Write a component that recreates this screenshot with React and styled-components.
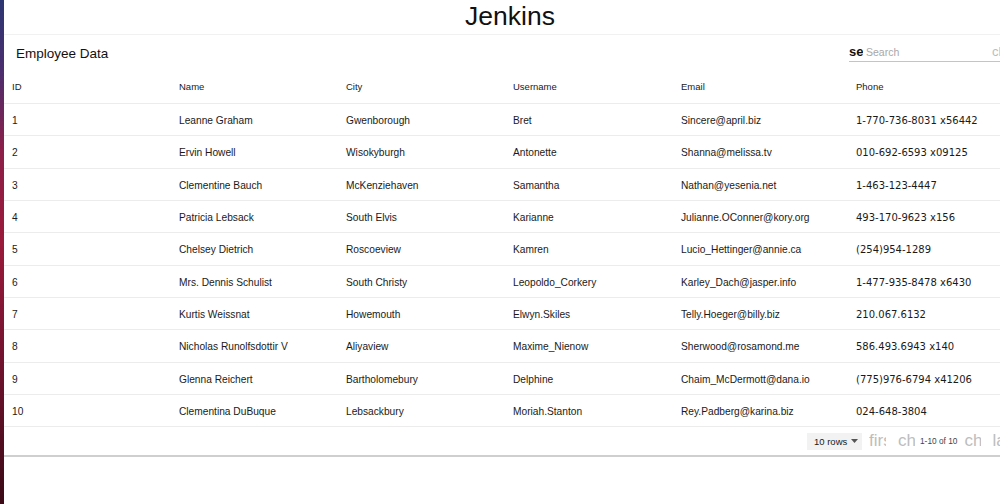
import React from 'react';
import styled, { createGlobalStyle } from 'styled-components';

const GlobalStyle = createGlobalStyle`
  html, body {
    margin: 0;
    padding: 0;
    background: #ffffff;
    overflow: hidden;
  }
  body {
    font-family: "Liberation Sans", Arial, sans-serif;
    color: rgba(0, 0, 0, 0.87);
  }
`;

const COLUMNS = [
  { key: 'id', title: 'ID', width: '167px' },
  { key: 'name', title: 'Name', width: '167px' },
  { key: 'city', title: 'City', width: '167px' },
  { key: 'username', title: 'Username', width: '168px' },
  { key: 'email', title: 'Email', width: '175px' },
  { key: 'phone', title: 'Phone', width: '1fr', wide: true },
];

const ROWS = [
  [1, 'Leanne Graham', 'Gwenborough', 'Bret', 'Sincere@april.biz', '1-770-736-8031 x56442'],
  [2, 'Ervin Howell', 'Wisokyburgh', 'Antonette', 'Shanna@melissa.tv', '010-692-6593 x09125'],
  [3, 'Clementine Bauch', 'McKenziehaven', 'Samantha', 'Nathan@yesenia.net', '1-463-123-4447'],
  [4, 'Patricia Lebsack', 'South Elvis', 'Karianne', 'Julianne.OConner@kory.org', '493-170-9623 x156'],
  [5, 'Chelsey Dietrich', 'Roscoeview', 'Kamren', 'Lucio_Hettinger@annie.ca', '(254)954-1289'],
  [6, 'Mrs. Dennis Schulist', 'South Christy', 'Leopoldo_Corkery', 'Karley_Dach@jasper.info', '1-477-935-8478 x6430'],
  [7, 'Kurtis Weissnat', 'Howemouth', 'Elwyn.Skiles', 'Telly.Hoeger@billy.biz', '210.067.6132'],
  [8, 'Nicholas Runolfsdottir V', 'Aliyaview', 'Maxime_Nienow', 'Sherwood@rosamond.me', '586.493.6943 x140'],
  [9, 'Glenna Reichert', 'Bartholomebury', 'Delphine', 'Chaim_McDermott@dana.io', '(775)976-6794 x41206'],
  [10, 'Clementina DuBuque', 'Lebsackbury', 'Moriah.Stanton', 'Rey.Padberg@karina.biz', '024-648-3804'],
];

const GRID = COLUMNS.map((c) => c.width).join(' ');

const Screen = styled.div`
  display: flex;
  width: 1020px;
  height: 504px;
`;

const DesktopEdge = styled.div`
  flex: 0 0 4px;
  background: linear-gradient(
    180deg,
    #2c3672 0%,
    #4b2e6e 14%,
    #8c1f48 30%,
    #9a1a3a 48%,
    #741330 70%,
    #3a0a16 100%
  );
`;

const Main = styled.div`
  flex: 0 0 1016px;
  display: flex;
  flex-direction: column;
  background: #ffffff;
`;

const Heading = styled.h1`
  margin: 0;
  height: 34px;
  padding-right: 4px;
  font-size: 26.5px;
  font-weight: 400;
  line-height: 33px;
  text-align: center;
  color: #111111;
`;

const Paper = styled.div`
  border-top: 1px solid #f1f1f1;
  border-bottom: 2px solid #cfcfcf;
`;

const Toolbar = styled.div`
  height: 35px;
  display: flex;
  align-items: center;
  padding-left: 12px;
`;

const ToolbarTitle = styled.div`
  font-size: 13.5px;
  color: #111111;
  padding-top: 1px;
`;

const SearchField = styled.div`
  margin-left: auto;
  width: 171px;
  height: 19px;
  display: flex;
  align-items: center;
  border-bottom: 1.5px solid #c4c4c4;
  margin-bottom: 1px;
`;

const IconText = styled.span`
  flex: 0 0 ${(p) => p.$box}px;
  width: ${(p) => p.$box}px;
  margin-right: ${(p) => p.$after || 0}px;
  overflow: hidden;
  white-space: nowrap;
  font-size: ${(p) => p.$size}px;
  line-height: 1.2;
  color: ${(p) => (p.$muted ? '#bdbdbd' : '#111111')};
  font-weight: ${(p) => (p.$bold ? 700 : 400)};
`;

const SearchInput = styled.span`
  flex: 1;
  padding-left: 3px;
  font-size: 10.5px;
  color: #a8a8a8;
`;

const Row = styled.div`
  display: grid;
  grid-template-columns: ${GRID};
  align-items: center;
  height: ${(p) => (p.$header ? '34px' : '32.33px')};
  box-sizing: border-box;
  border-bottom: 1px solid #ececec;
`;

const Cell = styled.div`
  padding-left: 8px;
  padding-top: ${(p) => (p.$header ? 0 : 2)}px;
  white-space: nowrap;
  overflow: hidden;
  font-family: ${(p) =>
    p.$wide ? '"DejaVu Sans", Verdana, sans-serif' : '"Liberation Sans", Arial, sans-serif'};
  font-size: ${(p) => (p.$header ? '9.5px' : p.$wide ? '10px' : '10.2px')};
  color: #1a1a1a;
`;

const Footer = styled.div`
  height: 28px;
  display: flex;
  align-items: center;
  padding-left: 803px;
`;

const RowsSelect = styled.div`
  display: flex;
  align-items: center;
  gap: 4px;
  height: 17px;
  width: 55px;
  box-sizing: border-box;
  padding-left: 7px;
  background: #f2f2f2;
  font-size: 9.5px;
  color: #1a1a1a;
  margin-right: 7px;
`;

const PageButton = styled.div`
  display: flex;
  align-items: center;
  margin-right: ${(p) => p.$gap}px;
`;

const Caption = styled.span`
  font-size: 8.3px;
  color: #444444;
  margin: 0 7px 0 5px;
`;

const Caret = () => (
  <svg width="7" height="4" viewBox="0 0 7 4">
    <path d="M0 0 L7 0 L3.5 4 Z" fill="#555555" />
  </svg>
);

export default function App() {
  return (
    <>
      <GlobalStyle />
      <Screen>
        <DesktopEdge />
        <Main>
          <Heading>Jenkins</Heading>
          <Paper>
            <Toolbar>
              <ToolbarTitle>Employee Data</ToolbarTitle>
              <SearchField>
                <IconText $box={14} $size={13} $bold>
                  search
                </IconText>
                <SearchInput>Search</SearchInput>
                <IconText $box={17} $size={13} $after={11} $muted>
                  clear
                </IconText>
              </SearchField>
            </Toolbar>
            <Row $header>
              {COLUMNS.map((c) => (
                <Cell key={c.key} $header>
                  {c.title}
                </Cell>
              ))}
            </Row>
            {ROWS.map((r) => (
              <Row key={r[0]}>
                {r.map((v, i) => (
                  <Cell key={i} $wide={COLUMNS[i].wide}>
                    {v}
                  </Cell>
                ))}
              </Row>
            ))}
            <Footer>
              <RowsSelect>
                10 rows <Caret />
              </RowsSelect>
              <PageButton $gap={12}>
                <IconText $box={17} $size={17} $muted>
                  first_page
                </IconText>
              </PageButton>
              <PageButton $gap={0}>
                <IconText $box={17} $size={17} $muted>
                  chevron_left
                </IconText>
              </PageButton>
              <Caption>1-10 of 10</Caption>
              <PageButton $gap={11}>
                <IconText $box={17} $size={17} $muted>
                  chevron_right
                </IconText>
              </PageButton>
              <PageButton $gap={0}>
                <IconText $box={17} $size={17} $muted>
                  last_page
                </IconText>
              </PageButton>
            </Footer>
          </Paper>
        </Main>
      </Screen>
    </>
  );
}
